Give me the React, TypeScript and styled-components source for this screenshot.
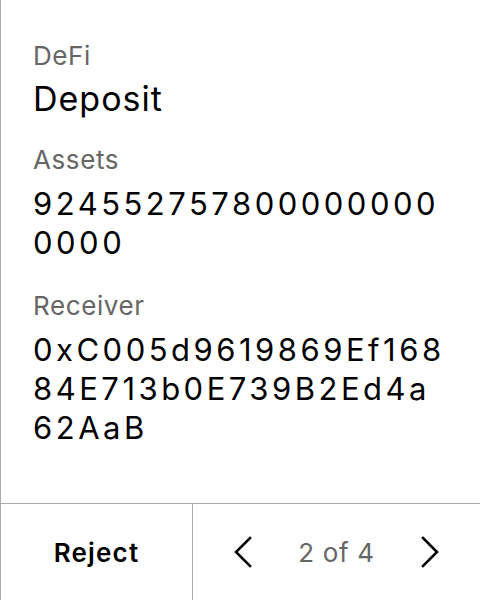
import styled, { createGlobalStyle } from "styled-components";

const GlobalStyle = createGlobalStyle`
  html, body {
    margin: 0;
    padding: 0;
    background: #ffffff;
  }
  body {
    font-family: Inter, "Noto Sans", "Liberation Sans", sans-serif;
    color: #000000;
  }
`;

type Field = { label: string; value: string };

const fields: Field[] = [
  { label: "Assets", value: "9245527578000000000000" },
  { label: "Receiver", value: "0xC005d9619869Ef16884E713b0E739B2Ed4a62AaB" },
];

const Chevron = ({ dir }: { dir: "left" | "right" }) => (
  <svg width="18" height="32" viewBox="0 0 18 32" fill="none">
    <polyline
      points={dir === "left" ? "16,2 2,16 16,30" : "2,2 16,16 2,30"}
      stroke="#000"
      strokeWidth="2.6"
      strokeLinecap="square"
      strokeLinejoin="miter"
    />
  </svg>
);

export default function App() {
  return (
    <>
      <GlobalStyle />
      <Screen>
        <Content>
          <Header>
            <Label>DeFi</Label>
            <Title>Deposit</Title>
          </Header>
          {fields.map((f) => (
            <Section key={f.label}>
              <Label>{f.label}</Label>
              <Value>{f.value}</Value>
            </Section>
          ))}
        </Content>
        <Footer>
          <RejectButton>Reject</RejectButton>
          <Pager>
            <NavButton aria-label="Previous">
              <Chevron dir="left" />
            </NavButton>
            <PageText>2 of 4</PageText>
            <NavButton aria-label="Next">
              <Chevron dir="right" />
            </NavButton>
          </Pager>
        </Footer>
      </Screen>
    </>
  );
}

const Screen = styled.div`
  width: 480px;
  height: 600px;
  box-sizing: border-box;
  border-left: 1px solid #ababab;
  display: flex;
  flex-direction: column;
  overflow: hidden;
`;

const Content = styled.div`
  flex: 1;
  padding: 40px 31px 0 32px;
  display: flex;
  flex-direction: column;
  gap: 25px;
`;

const Header = styled.div`
  display: flex;
  flex-direction: column;
  gap: 7px;
`;

const Section = styled.div`
  display: flex;
  flex-direction: column;
  gap: 8px;
`;

const Label = styled.div`
  font-size: 26px;
  line-height: 32px;
  letter-spacing: 0.6px;
  color: #666666;
`;

const Title = styled.div`
  font-size: 34px;
  line-height: 40px;
  letter-spacing: 1px;
  font-weight: 400;
`;

const Value = styled.div`
  font-size: 31px;
  line-height: 39px;
  letter-spacing: 3.5px;
  word-break: break-all;
  padding-bottom: 3px;
`;

const Footer = styled.div`
  height: 96px;
  border-top: 1px solid #ababab;
  display: grid;
  grid-template-columns: 192px 1fr;
`;

const RejectButton = styled.button`
  border: none;
  border-right: 1px solid #ababab;
  background: transparent;
  font-family: inherit;
  font-size: 26px;
  font-weight: 600;
  letter-spacing: 1.2px;
  color: #000;
  padding: 0;
`;

const Pager = styled.div`
  display: flex;
  align-items: center;
  justify-content: center;
  gap: 46px;
`;

const NavButton = styled.button`
  border: none;
  background: transparent;
  padding: 0;
  display: flex;
  align-items: center;
`;

const PageText = styled.span`
  font-size: 26px;
  letter-spacing: 0.7px;
  color: #666666;
`;
